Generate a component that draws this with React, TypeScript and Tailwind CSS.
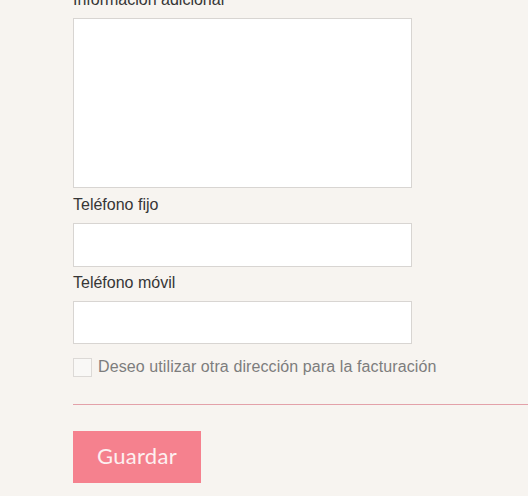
export default function App() {
  return (
    <div className="min-h-[496px] w-[528px] overflow-hidden bg-[#f7f4f0]" style={{ fontFamily: '"Liberation Sans", Arial, sans-serif' }}>
      <div className="mt-[-10px] pl-[73px]">
        <label className="block h-[20px] text-[16px] leading-[20px] text-[#363636] mb-[8px]">Información adicional</label>
        <textarea className="block w-[339px] h-[170px] bg-white border border-[#d8d5d2] outline-none resize-none" />
        <label className="block mt-[7px] h-[20px] text-[16px] leading-[20px] text-[#363636] mb-[8px]">Teléfono fijo</label>
        <input className="block w-[339px] h-[44px] bg-white border border-[#d8d5d2] outline-none" />
        <label className="block mt-[6px] h-[20px] text-[16px] leading-[20px] text-[#363636] mb-[8px]">Teléfono móvil</label>
        <input className="block w-[339px] h-[43px] bg-white border border-[#d8d5d2] outline-none" />
        <div className="mt-[13px] flex items-center h-[20px]">
          <span className="block w-[19px] h-[19px] bg-[#f9f8f6] border border-[#dcd9d6]" />
          <span className="ml-[6px] text-[16px] leading-[20px] tracking-[0.1px] text-[#7d7d7d]">Deseo utilizar otra dirección para la facturación</span>
        </div>
        <div className="mt-[27px] h-px bg-[#e3a1a9]" />
        <button className="mt-[26px] block w-[128px] h-[52px] bg-[#f5818e] text-[#fdf0f1] text-[22px] font-normal tracking-[0.3px] pb-[3px]" style={{ fontFamily: 'Lato, "Open Sans", sans-serif' }}>Guardar</button>
      </div>
    </div>
  );
}
